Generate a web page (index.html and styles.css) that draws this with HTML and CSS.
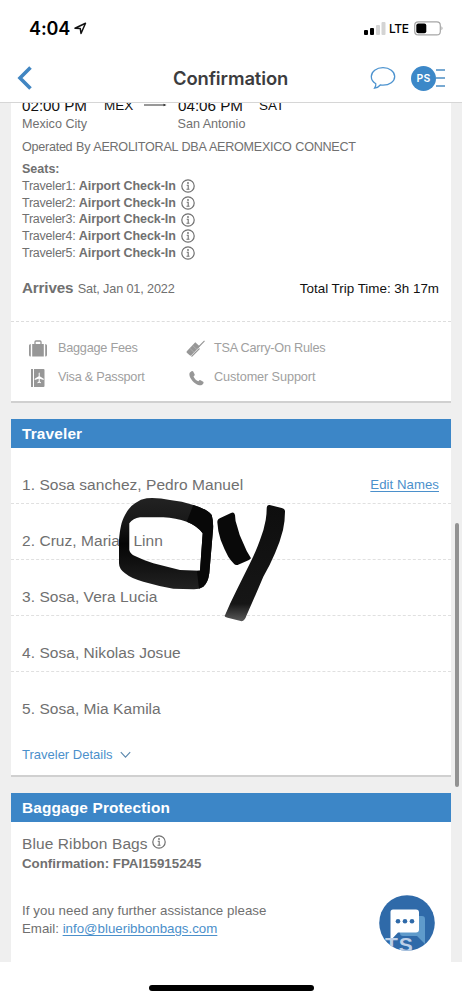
FILE: index.html
```html
<!DOCTYPE html>
<html lang="en">
<head>
<meta charset="utf-8">
<title>Confirmation</title>
<link rel="stylesheet" href="styles.css">
</head>
<body>
<svg class="defs" width="0" height="0">
  <symbol id="info" viewBox="0 0 14 14"><circle cx="7" cy="7" r="6.2" fill="none" stroke="currentColor" stroke-width="1.2"/><circle cx="7" cy="4" r=".9" fill="currentColor"/><path d="M5.700 6.200h1.500v4M5.500 10.300h3" fill="none" stroke="currentColor" stroke-width="1.1"/></symbol>
</svg>
<div class="phone">
  <div class="status">
    <div class="clock"><span class="time">4:04</span>
      <svg width="13" height="13" viewBox="0 0 13 13"><path d="M1 6.2 11.5 1.2 7 11.5 6.3 6.6Z" fill="none" stroke="#111" stroke-width="1.5" stroke-linejoin="round"/></svg>
    </div>
    <div class="signal">
      <svg width="22" height="13" viewBox="0 0 22 13"><rect x="0" y="8" width="4" height="5" rx="1"/><rect x="6" y="6" width="4" height="7" rx="1"/><rect x="12" y="3" width="4" height="10" rx="1" fill="#d4d4d4"/><rect x="17.500" y="0" width="4" height="13" rx="1" fill="#d4d4d4"/></svg>
      <span class="lte">LTE</span>
      <svg width="30" height="15" viewBox="0 0 30 15"><rect x=".7" y=".9" width="25.600" height="13" rx="3.500" fill="none" stroke="#a6a6a6" stroke-width="1.2"/><rect x="2.300" y="2.600" width="10" height="9.700" rx="2"/><path d="M27.500 5.300q2 2 0 4z" fill="#999"/></svg>
    </div>
  </div>
  <header class="nav">
    <svg class="back" width="16" height="24" viewBox="0 0 16 24"><path d="M13.500 1.500 3 12 13.500 22.500" fill="none" stroke="#4186c2" stroke-width="3.600"/></svg>
    <h1>Confirmation</h1>
    <div class="tools">
      <svg width="26" height="24" viewBox="0 0 26 24"><path d="M13 1.700C6.500 1.700 1.300 5.500 1.300 10.600c0 3 1.700 5.600 4.500 7.200.2 1.500-.4 3-1.200 4.300 2.500-.3 4.400-1.500 5.700-3.100.9.100 1.800.2 2.700.2 6.500 0 11.700-3.700 11.700-8.600S19.500 1.700 13 1.700Z" fill="none" stroke="#4d93cf" stroke-width="1.300"/></svg>
      <span class="avatar">PS</span>
      <span class="bars"><i></i><i></i><i></i></span>
    </div>
  </header>

  <main class="content">
    <section class="card trip">
      <div class="route black"><span class="t1">02:00 PM</span><span class="a1">MEX</span><svg class="arrow" width="23" height="8" viewBox="0 0 23 8"><path d="M0 4h21" stroke="#333" stroke-width="1"/><path d="M19.500 2.700 22.500 4 19.500 5.300Z" fill="#333"/></svg><span class="t2">04:06 PM</span><span class="a2">SAT</span></div>
      <div class="cities"><span>Mexico City</span><span>San Antonio</span></div>
      <p class="operated">Operated By AEROLITORAL DBA AEROMEXICO CONNECT</p>
      <p class="seats"><b>Seats:</b></p>
      <ul class="seatlist">
        <li><span>Traveler1: </span><b>Airport Check-In</b><svg class="info"><use href="#info"/></svg></li>
        <li><span>Traveler2: </span><b>Airport Check-In</b><svg class="info"><use href="#info"/></svg></li>
        <li><span>Traveler3: </span><b>Airport Check-In</b><svg class="info"><use href="#info"/></svg></li>
        <li><span>Traveler4: </span><b>Airport Check-In</b><svg class="info"><use href="#info"/></svg></li>
        <li><span>Traveler5: </span><b>Airport Check-In</b><svg class="info"><use href="#info"/></svg></li>
      </ul>
      <div class="arrives"><span class="date"><b>Arrives</b> Sat, Jan 01, 2022</span><span class="black total">Total Trip Time: 3h 17m</span></div>
      <div class="links">
        <div><svg width="18" height="18" viewBox="0 0 18 18" fill="#979797"><path d="M0 5.500Q0 4 1.800 4v12.500Q0 16.500 0 15ZM3.200 4h11.600v12.500H3.200ZM16.200 4Q18 4 18 5.500V15q0 1.500-1.800 1.500Z"/><path d="M6 4V2q0-1 1-1h4q1 0 1 1v2" fill="none" stroke="#979797" stroke-width="1.300"/></svg><span>Baggage Fees</span></div>
        <div><svg width="20" height="18" viewBox="0 0 20 18" fill="#979797"><path d="m.8 11.300 8.500-9 4.500 4.200-8.500 8.800q-.8.700-1.600 0l-2.900-2.600q-.6-.7 0-1.400Z"/><path d="m12 7.500 6.500-6.700M5.500 16.500l8-8" fill="none" stroke="#979797" stroke-width="1.100"/><path d="m4 8.500 4.500 4.300M6.700 5.600l4.600 4.300" stroke="#bbb" stroke-width=".6"/></svg><span>TSA Carry-On Rules</span></div>
        <div><svg width="18" height="18" viewBox="0 0 18 18" fill="#979797"><path d="M2 0h2v18H2ZM5 0h9.500q1 0 1 1v16q0 1-1 1H5Z"/><path d="M9.700 4q.5-1 1 0v3.300l4 2.500v1.100l-4-1.200v2.800l1.300 1v.8l-1.800-.5-1.800.5v-.8l1.300-1V9.700l-4 1.200V9.800l4-2.500Z" fill="#fff"/></svg><span>Visa &amp; Passport</span></div>
        <div class="support"><svg width="20" height="18" viewBox="0 0 20 18"><path d="M3.900 3.500c-1.800 2.300 1 8 5.900 11.200 3 1.900 5.600 2.400 7.200.3l.5-.9q.3-.8-.3-1.300l-2.600-1.600q-.8-.4-1.300.1l-.9 1c-2.300-.9-3.900-2.500-4.900-4.800l1-1q.4-.6.1-1.200L7.200 2.500Q6.600 1.700 5.900 2Z" fill="#979797"/></svg><span>Customer Support</span></div>
      </div>
    </section>

    <section class="card travelers">
      <h2>Traveler</h2>
      <ol>
        <li><span>1. Sosa sanchez, Pedro Manuel</span><a>Edit Names</a></li>
        <li><span>2. Cruz, Maria <span class="linn">Linn</span></span></li>
        <li>3. Sosa, Vera Lucia</li>
        <li>4. Sosa, Nikolas Josue</li>
        <li>5. Sosa, Mia Kamila</li>
      </ol>
      <div class="details">Traveler Details <svg width="11" height="8" viewBox="0 0 11 8"><path d="m.8 1.200 4.700 5 4.700-5" fill="none" stroke="#5a87ad" stroke-width="1.100"/></svg></div>
      <svg class="scribble" width="172" height="128" viewBox="0 0 172 128">
        <defs>
          <linearGradient id="tail" x1="0" y1="0" x2="0" y2="1"><stop offset="0" stop-color="#0e0e0e"/><stop offset=".85" stop-color="#161616"/><stop offset="1" stop-color="#5a5a5a"/></linearGradient>
          <linearGradient id="ring" x1="0" y1="0" x2="0" y2="1"><stop offset="0" stop-color="#222"/><stop offset=".25" stop-color="#191919"/><stop offset=".5" stop-color="#050505"/><stop offset=".8" stop-color="#161616"/><stop offset="1" stop-color="#222"/></linearGradient>
        </defs>
        <path fill="url(#ring)" fill-rule="evenodd" d="M3 44C4 34 5 26 9 19Q13 11 19 7.300 25 3 30.700 2.300 42 1.500 54 4 66 5 77.300 9 91 13 95.700 19 98 27 96.700 37.300L93.300 77.300Q92 87 87.300 90.700 83 93.500 77.300 93.300L57.300 92.700Q42 90 27.300 85.700 16 83 9 77.300 3 73 3 67.300ZM13.300 27.300V54q1 4 5.700 6 8 4 18.300 7.300L64 74l20 .7L86.700 37.300Q80 29 70.700 25.700 60 22 47.300 21.300H24q-7 1-10.700 6Z"/>
        <path d="M77.300 9Q91 13 95.700 19q2.300 8 1 18.300l-3.400 40Q92 87 87.300 90.700l-4.300 2L81 75l3-.5 2.700-37.200Q82 30 70.700 25.700Z" fill="#080808"/>
        <path d="M101.300 26q0-3 3-4L115 17q3-1.500 4 2 0 6 2.300 11.700 2 9 6 16.600 3 8 7.700 15-2 2-4.300 2.700l-8 3.500q-3 1.500-5-1-3-3-5.400-6.800-4.300-8-7.600-16.700-3-9-3.400-18Z" fill="#090909"/>
        <path d="M150.700 12q.3-3.500 3-3l12 3q3.500 1 3.300 3.700 0 9-2 18.300-3 12-8 23.300-5 12-11.700 23.400-8 19-16.600 38.300-2 6-5 6.300l-14-3.500q-4-1-2.700-2.500 5-12 11.700-25.300 7-14 13.300-26.700 6-12 10-23.300 4-10 5.700-20 1-6 1-12Z" fill="url(#tail)"/>
      </svg>
    </section>

    <section class="card baggage">
      <h2>Baggage Protection</h2>
      <p class="ribbon">Blue Ribbon Bags<svg class="info"><use href="#info"/></svg></p>
      <p class="code"><b>Confirmation: FPAI15915245</b></p>
      <p class="assist">If you need any further assistance please</p>
      <p class="email">Email: <a>info@blueribbonbags.com</a></p>
    </section>
    <i class="scrollbar"></i>
    <svg class="chat" width="56" height="56" viewBox="0 0 56 56">
      <defs><clipPath id="disc"><circle cx="28" cy="28" r="27.800"/></clipPath></defs>
      <g clip-path="url(#disc)">
        <rect width="56" height="56" fill="#2f6aa9"/>
        <path d="M21 21h22q3 0 3 3v25l-8-8H24q-3 0-3-3Z" fill="#5f9bcb"/>
        <path d="M14 14.500h23q3 0 3 3v17q0 3-3 3H19l-7.500 8V17q0-2.500 2.500-2.500Z" fill="#fff"/>
        <g fill="#2f6aa9"><circle cx="19" cy="26.300" r="2.300"/><circle cx="26" cy="26.300" r="2.300"/><circle cx="33" cy="26.300" r="2.300"/></g>
        <text x="6" y="57" class="mark">TS</text>
      </g>
    </svg>
  </main>
  <footer class="home"><i></i></footer>
</div>
</body>
</html>
```
FILE: styles.css
```css
* { box-sizing: border-box; margin: 0; padding: 0; }
body { width: 462px; height: 1000px; overflow: hidden; background: #fff; color: #707070; font: 13px/17px "Liberation Sans", Arial, sans-serif; }
.defs { position: absolute; }
svg { display: block; flex: none; }
ul, ol { list-style: none; }
.phone { display: flex; flex-direction: column; height: 1000px; }
.status { display: flex; justify-content: space-between; height: 54px; padding: 16px 18px 0 29px; color: #000; font-family: Inter, sans-serif; }
.clock, .signal { display: flex; align-items: center; height: 24px; }
.clock { gap: 4px; }
.time { font-size: 18px; font-weight: 600; letter-spacing: -0.1px; }
.lte { width: 20px; margin: 0 5px 0 3px; font-size: 12px; font-weight: 500; letter-spacing: -0.4px; }
.nav { display: flex; align-items: center; height: 48px; padding: 0 17px; }
.back { margin-right: 140px; }
.nav h1 { margin-right: auto; font: 600 18.4px/24px Inter, sans-serif; letter-spacing: -0.1px; color: #3c3c3e; }
.tools { display: flex; align-items: center; }
.avatar { width: 25px; height: 25px; margin-left: 15px; border-radius: 50%; background: #3c88c8; color: #fff; font: 600 10.5px/25px Inter, sans-serif; text-align: center; letter-spacing: 0.3px; }
.bars { display: flex; flex-direction: column; align-items: flex-end; gap: 6px; width: 9px; }
.bars i { width: 9px; height: 2px; background: #78a9d2; }
.content { position: relative; height: 860px; overflow: hidden; border-top: 1px solid #d6d6d6; background: #efefef; }
.card { width: 440px; margin: 0 0 16px 11px; background: #fff; border-bottom: 2px solid #d0d0d0; }
.black { color: #111; }
.route { display: flex; align-items: center; height: 18px; margin-top: -7px; padding-left: 11px; font-size: 15.2px; }
.t1 { width: 82px; }
.a1 { width: 40px; font-size: 13.5px; }
.t2 { width: 81px; margin-left: 11px; }
.a2 { font-size: 13.5px; }
.trip { display: flow-root; height: 300px; }
.cities { display: flex; height: 21px; padding: 1px 0 0 11px; font-size: 12.6px; line-height: 18px; }
.cities span { width: 155.5px; }
.operated { padding-left: 11px; line-height: 24px; font-size: 12.6px; letter-spacing: -0.27px; word-spacing: 0.5px; }
.seats { padding-left: 11px; margin-top: 2px; line-height: 17px; font-size: 12.5px; }
.seatlist { padding-left: 11px; font-size: 12.5px; }
.seatlist li { display: flex; align-items: center; height: 16.7px; white-space: pre; }
.seatlist span { letter-spacing: -0.23px; }
.seatlist b { letter-spacing: -0.05px; }
.info { width: 14px; height: 14px; margin-left: 5px; }
.arrives { display: flex; align-items: center; justify-content: space-between; height: 61px; padding: 0 12px 5px 11px; font-size: 12.7px; border-bottom: 1px dashed #ddd; }
.date { letter-spacing: -0.15px; }
.arrives b { margin-right: 1px; font-size: 15.2px; }
.arrives .total { font-size: 13.4px; }
.links { display: grid; grid-template-columns: 157px 1fr; grid-auto-rows: 29px; padding: 12px 0 0 18px; color: #a0a0a0; font-size: 12.7px; letter-spacing: -0.24px; }
.links div { display: flex; align-items: center; gap: 11px; }
.links div:nth-child(even) { gap: 8px; }
.links .support { letter-spacing: -0.1px; }
h2 { height: 29px; padding-left: 11px; background: #3c86c7; color: #fff; font-size: 15.4px; line-height: 30px; letter-spacing: 0.15px; }
.travelers { position: relative; height: 358px; }
.travelers ol { font-size: 15.5px; letter-spacing: 0.05px; }
.travelers li { display: flex; align-items: center; justify-content: space-between; height: 56px; padding: 17px 12px 0 11px; border-bottom: 1px dashed #e0e0e0; }
.travelers li:last-child { border-bottom-color: transparent; }
.travelers a { font-size: 13.2px; }
a { color: #4b90cb; text-decoration: underline; text-underline-offset: 2px; }
.linn { margin-left: 9px; }
.details { display: flex; align-items: center; gap: 7px; height: 37px; padding: 16px 0 0 11px; color: #4b90cb; font-size: 13px; }
.scribble { position: absolute; left: 105px; top: 77px; }
.baggage { height: 200px; margin-bottom: 0; }
.baggage p { padding-left: 11px; font-size: 13.3px; }
.baggage .ribbon { display: flex; height: 31px; padding-top: 13px; font-size: 15.5px; letter-spacing: 0.1px; }
.ribbon .info { margin-left: 4px; }
.code { line-height: 21px; }
.assist { margin-top: 28px; line-height: 18px; letter-spacing: 0.05px; }
.email { line-height: 18px; }
.scrollbar { position: absolute; left: 455px; top: 420px; width: 4px; height: 264px; border-radius: 2px; background: #929292; }
.chat { position: absolute; left: 379px; top: 792px; }
.mark { font: 700 21px "Liberation Sans", Arial, sans-serif; fill: #bdd0e8; letter-spacing: 1px; }
.home { display: flex; justify-content: center; height: 38px; padding-top: 23px; }
.home i { width: 165px; height: 6px; border-radius: 3px; background: #000; }
```
